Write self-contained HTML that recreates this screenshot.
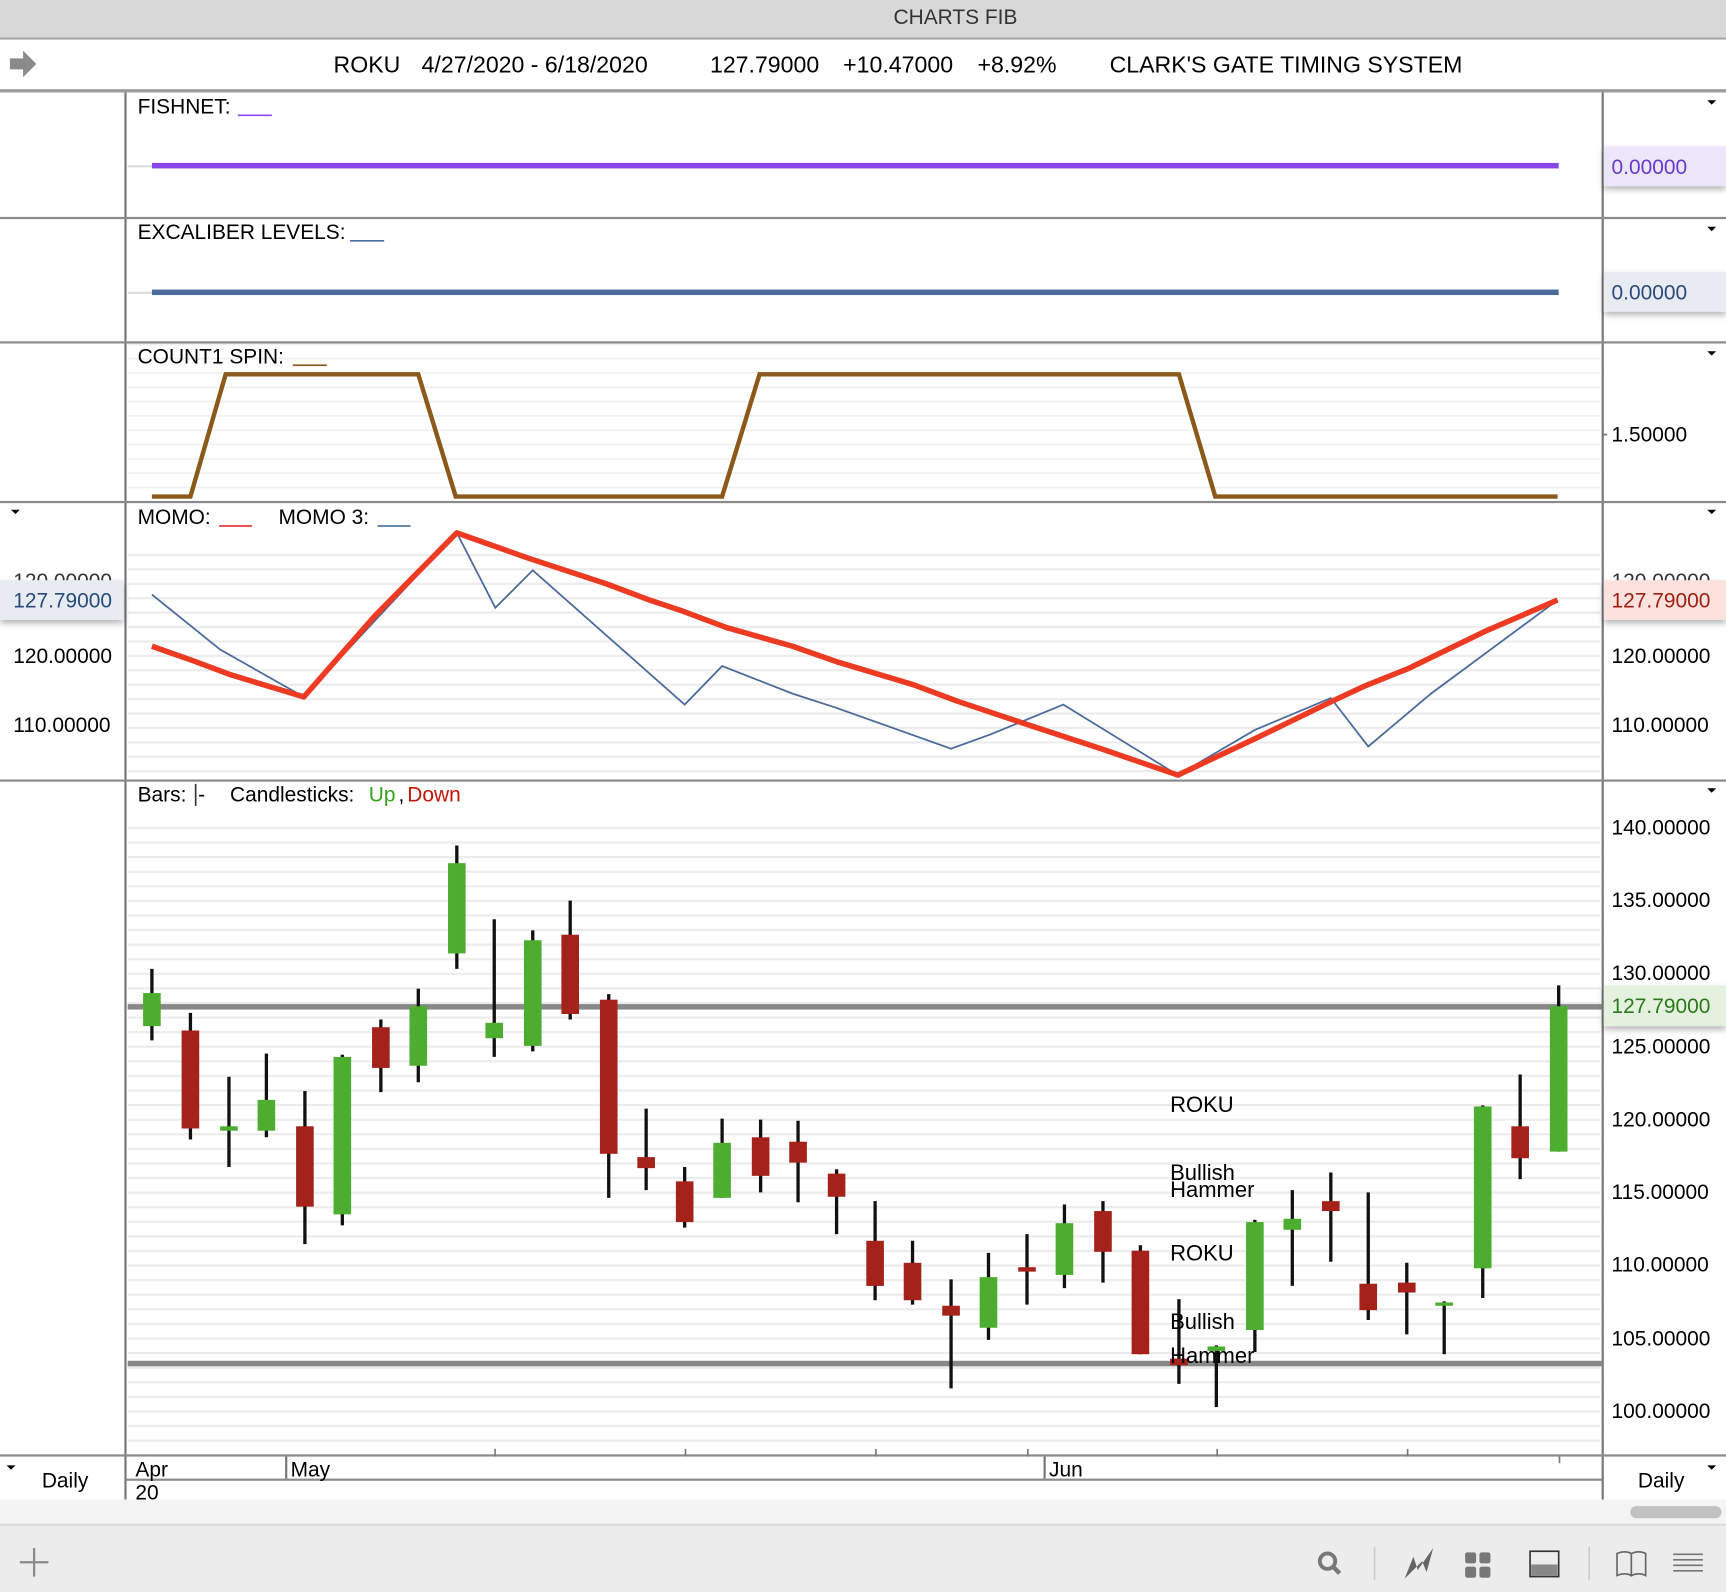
<!DOCTYPE html>
<html><head><meta charset="utf-8"><style>
html,body{margin:0;padding:0;background:#fff;overflow:hidden}
svg{display:block}
text{font-family:"Liberation Sans",Arial,sans-serif}
</style></head><body>
<svg width="1726" height="1592" viewBox="0 0 1568 1446" preserveAspectRatio="none" xmlns="http://www.w3.org/2000/svg">
<defs>
<pattern id="g1" x="0" y="751" width="10" height="13.25" patternUnits="userSpaceOnUse"><rect width="10" height="13.25" fill="#fff"/><rect y="0" width="10" height="2" fill="#ececec"/></pattern>
<pattern id="g2" x="0" y="338" width="10" height="13" patternUnits="userSpaceOnUse"><rect width="10" height="13" fill="#fff"/><rect y="0" width="10" height="1.5" fill="#f0f0f0"/></pattern>
<pattern id="g3" x="0" y="503" width="10" height="13.1" patternUnits="userSpaceOnUse"><rect width="10" height="13.1" fill="#fff"/><rect y="0" width="10" height="2" fill="#ececec"/></pattern>
<filter id="sh" x="-10%" y="-30%" width="130%" height="180%"><feDropShadow dx="0" dy="3" stdDeviation="3" flood-color="#000" flood-opacity="0.3"/></filter>
</defs>
<rect width="1568" height="1446" fill="#fff"/>
<!-- title bar -->
<rect x="0" y="0" width="1568" height="35" fill="#d8d8d8"/>
<rect x="0" y="34" width="1568" height="2" fill="#a8a8a8"/>
<text x="868" y="22" font-size="19" text-anchor="middle" fill="#333">CHARTS FIB</text>
<!-- header -->
<path d="M9 53h12v-7l12 12-12 12v-7H9z" fill="#8a8a8a"/>
<text y="66" font-size="21" fill="#000"><tspan x="303">ROKU</tspan><tspan x="383">4/27/2020 - 6/18/2020</tspan><tspan x="645">127.79000</tspan><tspan x="766">+10.47000</tspan><tspan x="888">+8.92%</tspan><tspan x="1008">CLARK'S GATE TIMING SYSTEM</tspan></text>
<rect x="0" y="81" width="1568" height="3" fill="#9a9a9a"/>

<!-- panel backgrounds -->
<rect x="116" y="312" width="1338" height="144" fill="url(#g2)"/>
<rect x="116" y="495" width="1338" height="213" fill="url(#g3)"/>
<rect x="116" y="745" width="1338" height="576" fill="url(#g1)"/>

<!-- vertical separators -->
<rect x="113" y="84" width="2" height="1278" fill="#777"/>
<rect x="1455" y="84" width="2" height="1278" fill="#777"/>
<!-- horizontal separators -->
<g fill="#8a8a8a">
<rect x="0" y="197" width="1568" height="2"/>
<rect x="0" y="310" width="1568" height="2"/>
<rect x="0" y="455" width="1568" height="2"/>
<rect x="0" y="708" width="1568" height="2"/>
<rect x="0" y="1321" width="1568" height="2"/>
<rect x="115" y="1343" width="1340" height="2"/>
</g>

<!-- FISHNET -->
<text x="125" y="103" font-size="19">FISHNET:</text>
<rect x="216" y="104" width="31" height="1.5" fill="#8a4af0"/>
<rect x="116" y="150" width="22" height="2" fill="#ddd"/>
<rect x="138" y="148" width="1278" height="5" fill="#8a44ec"/>
<rect x="1457" y="133" width="111" height="36" fill="#ece6fb" filter="url(#sh)"/>
<text x="1464" y="158" font-size="19" fill="#6a3ad0">0.00000</text>
<path d="M1551 91h8l-4 4z"/>

<!-- EXCALIBER -->
<text x="125" y="217" font-size="19">EXCALIBER LEVELS:</text>
<rect x="318" y="218" width="31" height="1.5" fill="#4a6fa0"/>
<rect x="116" y="265" width="22" height="2" fill="#ddd"/>
<rect x="138" y="263" width="1278" height="5" fill="#4a6a9a"/>
<rect x="1457" y="247" width="111" height="36" fill="#e8ecf2" filter="url(#sh)"/>
<text x="1464" y="272" font-size="19" fill="#2a4a7a">0.00000</text>
<path d="M1551 206h8l-4 4z"/>

<!-- COUNT1 SPIN -->
<text x="125" y="330" font-size="19">COUNT1 SPIN:</text>
<rect x="266" y="331" width="31" height="1.5" fill="#8b5a1a"/>
<polyline points="138,451 173,451 205,340 380,340 414,451 656,451 690,340 1071,340 1104,451 1415,451" fill="none" stroke="#8b5a1a" stroke-width="4"/>
<text x="1464" y="401" font-size="19">1.50000</text>
<rect x="1456" y="394" width="4" height="1.5" fill="#777"/>
<path d="M1551 319h8l-4 4z"/>

<!-- MOMO -->
<text x="125" y="476" font-size="19">MOMO:</text>
<rect x="199" y="477" width="30" height="1.5" fill="#e33"/>
<text x="253" y="476" font-size="19">MOMO 3:</text>
<rect x="343" y="477" width="30" height="1.5" fill="#4a6fa0"/>
<polyline points="138,540 200,590 276,633 415,484 450,552 484,518 622,640 656,605 720,630 760,643 864,680 900,667 966,640 1070,704 1140,663 1209,634 1243,678 1300,630 1415,545" fill="none" stroke="#4a6a9a" stroke-width="1.6"/>
<polyline points="138,587 175,600 210,613 276,633 340,560 415,484 480,507 550,530 590,545 620,555 660,570 720,587 760,601 830,622 870,637 930,657 1000,680 1070,704 1140,671 1210,637 1240,623 1280,607 1350,573 1415,545" fill="none" stroke="#ec3b22" stroke-width="5" stroke-linejoin="round"/>
<path d="M10 463h8l-4 4z"/><path d="M1551 463h8l-4 4z"/>
<text x="12" y="534" font-size="19" fill="#333">120.00000</text>
<rect x="0" y="527" width="112" height="36" fill="#e8ecf2" filter="url(#sh)"/>
<text x="12" y="552" font-size="19" fill="#2a4a7a">127.79000</text>
<text x="12" y="602" font-size="19">120.00000</text>
<text x="12" y="665" font-size="19">110.00000</text>
<text x="1464" y="534" font-size="19" fill="#333">120.00000</text>
<rect x="1457" y="527" width="111" height="36" fill="#fbe2df" filter="url(#sh)"/>
<text x="1464" y="552" font-size="19" fill="#a02010">127.79000</text>
<text x="1464" y="602" font-size="19">120.00000</text>
<text x="1464" y="665" font-size="19">110.00000</text>

<!-- Candles panel -->
<text x="125" y="728" font-size="19">Bars:</text>
<rect x="177" y="712" width="1.5" height="20" fill="#333"/><text x="180" y="728" font-size="19">-</text>
<text x="209" y="728" font-size="19">Candlesticks:</text>
<text x="335" y="728" font-size="19" fill="#3aa020">Up</text><text x="362" y="728" font-size="19">,</text>
<text x="370" y="728" font-size="19" fill="#c01808">Down</text>
<path d="M1551 716h8l-4 4z"/>

<rect x="116" y="912" width="1340" height="5" fill="#888"/>
<rect x="116" y="1236" width="1340" height="5" fill="#888"/>

<g stroke="#111" stroke-width="3">
<line x1="138" y1="880" x2="138" y2="945"/><line x1="173" y1="920" x2="173" y2="1035"/><line x1="208" y1="978" x2="208" y2="1060"/><line x1="242" y1="957" x2="242" y2="1033"/><line x1="277" y1="991" x2="277" y2="1130"/><line x1="311" y1="958" x2="311" y2="1113"/><line x1="346" y1="926" x2="346" y2="992"/><line x1="380" y1="898" x2="380" y2="983"/><line x1="415" y1="768" x2="415" y2="880"/><line x1="449" y1="835" x2="449" y2="960"/><line x1="484" y1="845" x2="484" y2="955"/><line x1="518" y1="818" x2="518" y2="926"/><line x1="553" y1="903" x2="553" y2="1088"/><line x1="587" y1="1007" x2="587" y2="1081"/><line x1="622" y1="1060" x2="622" y2="1115"/><line x1="656" y1="1016" x2="656" y2="1088"/><line x1="691" y1="1017" x2="691" y2="1083"/><line x1="725" y1="1018" x2="725" y2="1092"/><line x1="760" y1="1062" x2="760" y2="1121"/><line x1="795" y1="1091" x2="795" y2="1181"/><line x1="829" y1="1127" x2="829" y2="1185"/><line x1="864" y1="1162" x2="864" y2="1261"/><line x1="898" y1="1138" x2="898" y2="1217"/><line x1="933" y1="1121" x2="933" y2="1185"/><line x1="967" y1="1094" x2="967" y2="1170"/><line x1="1002" y1="1091" x2="1002" y2="1165"/><line x1="1036" y1="1131" x2="1036" y2="1230"/><line x1="1071" y1="1180" x2="1071" y2="1257"/><line x1="1105" y1="1222" x2="1105" y2="1278"/><line x1="1140" y1="1108" x2="1140" y2="1228"/><line x1="1174" y1="1081" x2="1174" y2="1168"/><line x1="1209" y1="1065" x2="1209" y2="1146"/><line x1="1243" y1="1083" x2="1243" y2="1199"/><line x1="1278" y1="1147" x2="1278" y2="1212"/><line x1="1312" y1="1182" x2="1312" y2="1230"/><line x1="1347" y1="1004" x2="1347" y2="1179"/><line x1="1381" y1="976" x2="1381" y2="1071"/><line x1="1416" y1="895" x2="1416" y2="1046"/>
</g>
<g fill="#4cad2f">
<rect x="130" y="902" width="16" height="30"/><rect x="200" y="1023" width="16" height="4"/><rect x="234" y="999" width="16" height="28"/><rect x="303" y="960" width="16" height="143"/><rect x="372" y="914" width="16" height="54"/><rect x="407" y="784" width="16" height="82"/><rect x="441" y="929" width="16" height="14"/><rect x="476" y="854" width="16" height="96"/><rect x="648" y="1038" width="16" height="50"/><rect x="890" y="1160" width="16" height="46"/><rect x="959" y="1111" width="16" height="47"/><rect x="1097" y="1223" width="16" height="4"/><rect x="1132" y="1110" width="16" height="98"/><rect x="1166" y="1107" width="16" height="10"/><rect x="1304" y="1183" width="16" height="3"/><rect x="1339" y="1005" width="16" height="147"/><rect x="1408" y="914" width="16" height="132"/>
</g>
<g fill="#a4221a">
<rect x="165" y="936" width="16" height="89"/><rect x="269" y="1023" width="16" height="73"/><rect x="338" y="933" width="16" height="37"/><rect x="510" y="849" width="16" height="72"/><rect x="545" y="908" width="16" height="140"/><rect x="579" y="1051" width="16" height="10"/><rect x="614" y="1073" width="16" height="37"/><rect x="683" y="1033" width="16" height="35"/><rect x="717" y="1037" width="16" height="19"/><rect x="752" y="1066" width="16" height="21"/><rect x="787" y="1127" width="16" height="41"/><rect x="821" y="1147" width="16" height="34"/><rect x="856" y="1186" width="16" height="9"/><rect x="925" y="1151" width="16" height="4"/><rect x="994" y="1100" width="16" height="37"/><rect x="1028" y="1136" width="16" height="94"/><rect x="1063" y="1234" width="16" height="6"/><rect x="1201" y="1091" width="16" height="9"/><rect x="1235" y="1166" width="16" height="24"/><rect x="1270" y="1165" width="16" height="9"/><rect x="1373" y="1023" width="16" height="29"/>
</g>
<g font-size="20">
<text x="1063" y="1010">ROKU</text><text x="1063" y="1072">Bullish</text><text x="1063" y="1087">Hammer</text>
<text x="1063" y="1145">ROKU</text><text x="1063" y="1207">Bullish</text><text x="1063" y="1238">Hammer</text>
</g>
<g font-size="19">
<text x="1464" y="758">140.00000</text><text x="1464" y="824">135.00000</text><text x="1464" y="890">130.00000</text><text x="1464" y="957">125.00000</text><text x="1464" y="1023">120.00000</text><text x="1464" y="1089">115.00000</text><text x="1464" y="1155">110.00000</text><text x="1464" y="1222">105.00000</text><text x="1464" y="1288">100.00000</text>
</g>
<rect x="1457" y="895" width="111" height="37" fill="#e4f1df" filter="url(#sh)"/>
<text x="1464" y="920" font-size="19" fill="#2a7a1a">127.79000</text>

<!-- x axis -->
<g fill="#777"><rect x="449" y="1316" width="1.5" height="7"/><rect x="622" y="1316" width="1.5" height="7"/><rect x="795" y="1316" width="1.5" height="7"/><rect x="933" y="1316" width="1.5" height="7"/><rect x="1105" y="1316" width="1.5" height="7"/><rect x="1278" y="1316" width="1.5" height="7"/><rect x="1416" y="1323" width="1.5" height="6"/>
<rect x="259" y="1323" width="2" height="20"/><rect x="948" y="1323" width="2" height="20"/></g>
<text x="123" y="1341" font-size="19">Apr</text><text x="123" y="1362" font-size="19">20</text>
<text x="264" y="1341" font-size="19">May</text><text x="953" y="1341" font-size="19">Jun</text>
<text x="38" y="1351" font-size="19">Daily</text><path d="M6 1331h8l-4 4z"/>
<text x="1488" y="1351" font-size="19">Daily</text><path d="M1551 1331h8l-4 4z"/>

<!-- bottom -->
<rect x="0" y="1362" width="1568" height="84" fill="#ececec"/>
<rect x="0" y="1362" width="1568" height="22" fill="#f4f4f4"/>
<rect x="0" y="1384" width="1568" height="2" fill="#ddd"/>
<rect x="1481" y="1368" width="83" height="11" rx="5.5" fill="#c2c2c2"/>
<path d="M31 1406v26M18 1419h26" stroke="#888" stroke-width="2"/>
<circle cx="1206" cy="1418" r="7" fill="none" stroke="#777" stroke-width="3.5"/><path d="M1211 1423l6 6" stroke="#777" stroke-width="4"/>
<rect x="1248" y="1405" width="1.5" height="30" fill="#ccc"/>
<path d="M1276 1434l8-20 4 12 14-20-6 22-4-10z" fill="#666"/>
<g fill="#777"><rect x="1331" y="1410" width="10" height="10" rx="2"/><rect x="1344" y="1410" width="10" height="10" rx="2"/><rect x="1331" y="1423" width="10" height="10" rx="2"/><rect x="1344" y="1423" width="10" height="10" rx="2"/></g>
<rect x="1390" y="1409" width="26" height="23" fill="none" stroke="#333" stroke-width="1.5"/><rect x="1391" y="1421" width="24" height="10" fill="#888"/>
<rect x="1443" y="1405" width="1.5" height="30" fill="#ccc"/>
<path d="M1469 1411q7-3 13 0v20q-6-3-13 0zM1482 1411q7-3 13 0v20q-6-3-13 0z" fill="none" stroke="#666" stroke-width="1.5"/>
<g fill="#777"><rect x="1520" y="1411" width="27" height="1.5"/><rect x="1520" y="1416" width="27" height="1.5"/><rect x="1520" y="1421" width="27" height="1.5"/><rect x="1520" y="1426" width="27" height="1.5"/></g>
</svg>
</body></html>
